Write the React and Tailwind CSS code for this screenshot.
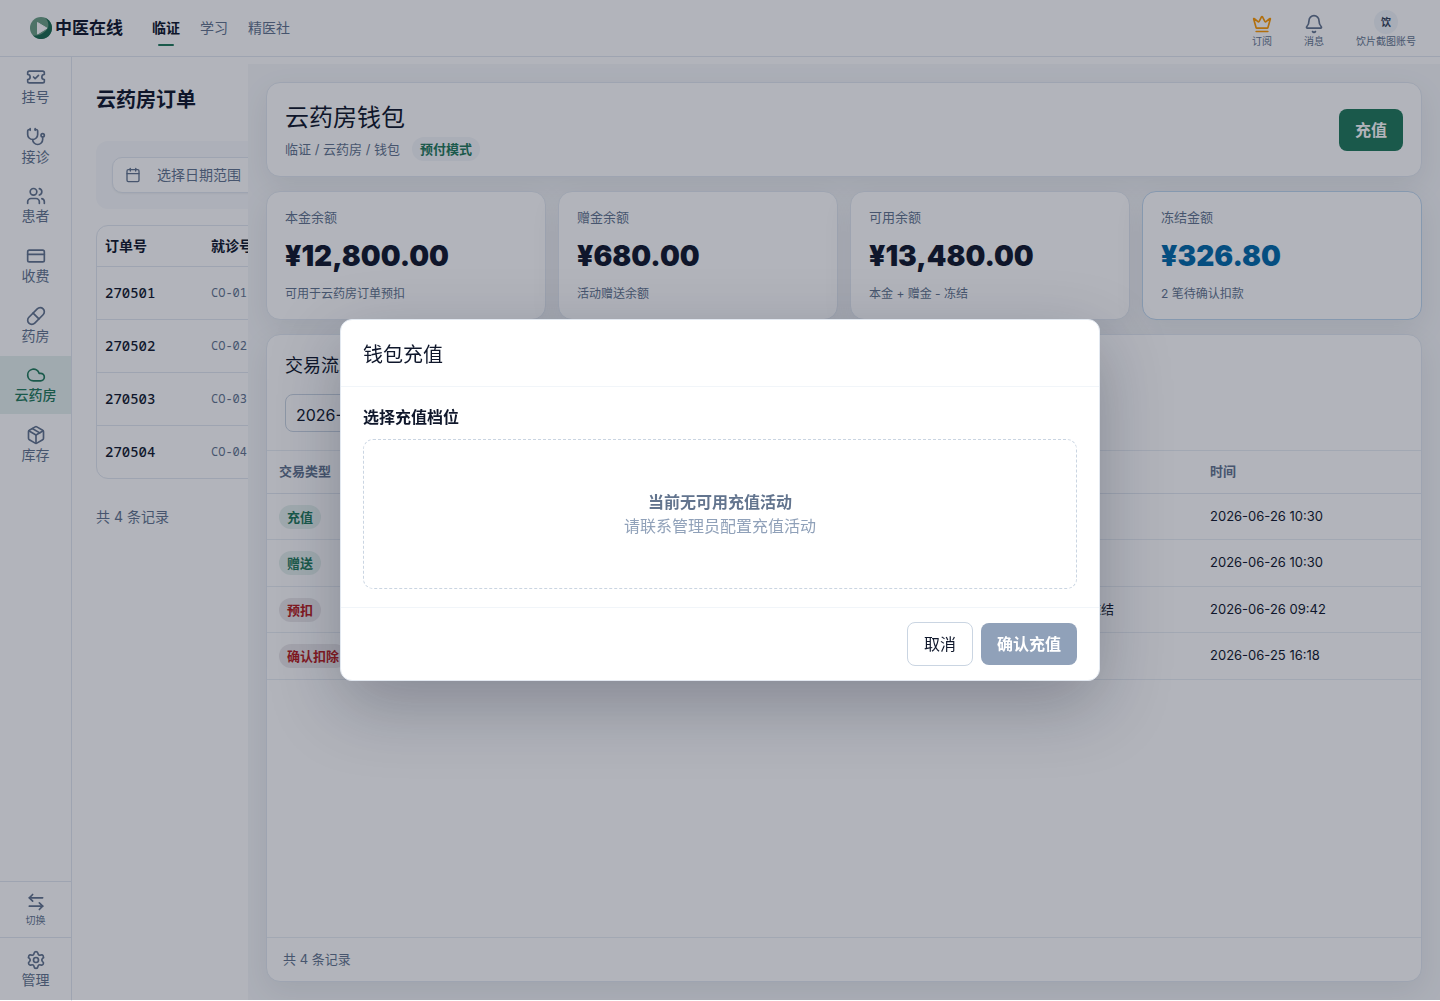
import {
	ArrowLeftRight,
	Bell,
	Calendar,
	Cloud,
	CreditCard,
	Crown,
	Package,
	Pill,
	Settings,
	Stethoscope,
	TicketCheck,
	Users,
} from "lucide-react";

const navItems = [
	{ label: "挂号", icon: TicketCheck },
	{ label: "接诊", icon: Stethoscope },
	{ label: "患者", icon: Users },
	{ label: "收费", icon: CreditCard },
	{ label: "药房", icon: Pill },
	{ label: "云药房", icon: Cloud, active: true },
	{ label: "库存", icon: Package },
];

const orders = [
	{ id: "270501", visit: "CO-01-0626" },
	{ id: "270502", visit: "CO-02-0626" },
	{ id: "270503", visit: "CO-03-0626" },
	{ id: "270504", visit: "CO-04-0626" },
];

const balances = [
	{ label: "本金余额", amount: "¥12,800.00", note: "可用于云药房订单预扣" },
	{ label: "赠金余额", amount: "¥680.00", note: "活动赠送余额" },
	{ label: "可用余额", amount: "¥13,480.00", note: "本金 + 赠金 - 冻结" },
	{ label: "冻结金额", amount: "¥326.80", note: "2 笔待确认扣款", frozen: true },
];

const transactions = [
	{ type: "充值", amount: "+¥5,000.00", order: "-", note: "钱包充值", time: "2026-06-26 10:30", income: true },
	{ type: "赠送", amount: "+¥200.00", order: "-", note: "活动赠送", time: "2026-06-26 10:30", income: true },
	{ type: "预扣", amount: "-¥168.40", order: "270502", note: "云药房订单预扣冻结", time: "2026-06-26 09:42" },
	{ type: "确认扣除", amount: "-¥158.40", order: "270501", note: "订单确认", time: "2026-06-25 16:18" },
];

function TopBar() {
	return (
		<header className="flex h-[57px] shrink-0 items-center justify-between border-b border-slate-200 bg-white pl-[30px] pr-6">
			<div className="flex items-center">
				<a href="#home" className="flex items-center gap-[3px]">
					<svg viewBox="0 0 22 22" className="size-[22px]" aria-hidden="true">
						<circle cx="11" cy="11" r="11" fill="#6a9f84" />
						<path d="M15 .8A11 11 0 1 1 3 18.6C8 19 14 17 18 11C19 7 18 3 15 .8Z" fill="#1a6a4e" />
						<path d="M7.500 5.500v11.500l9.500-5.800z" fill="#fff" stroke="#fff" strokeLinejoin="round" />
					</svg>
					<span className="text-[17px] leading-6 font-bold">中医在线</span>
				</a>
				<nav className="ml-[29px] flex gap-5 text-sm text-slate-500">
					<a href="#clinic" className="relative font-bold text-slate-900">
						临证
						<span className="absolute -bottom-2 left-1/2 h-0.5 w-4 -translate-x-1/2 rounded-full bg-[#1f7a5a]" />
					</a>
					<a href="#study">学习</a>
					<a href="#club">精医社</a>
				</nav>
			</div>
			<div className="flex items-end text-[10px] leading-[14px] text-slate-500">
				<button className="mr-8 flex flex-col items-center pt-1.5">
					<Crown size={20} className="text-amber-500" />
					订阅
				</button>
				<button className="mr-8 flex flex-col items-center pt-1.5">
					<Bell size={20} />
					消息
				</button>
				<button className="flex flex-col items-center">
					<span className="flex size-6 items-center justify-center rounded-full bg-slate-100 font-bold text-slate-700">饮</span>
					饮片截图账号
				</button>
			</div>
		</header>
	);
}

function Sidebar() {
	return (
		<aside className="flex w-[72px] shrink-0 flex-col justify-between border-r border-slate-200 text-sm text-slate-500">
			<nav className="grid h-[417px] grid-rows-7 gap-px">
				{navItems.map(({ label, icon: Icon, active }) => (
					<a
						key={label}
						href={`#${label}`}
						className={`flex flex-col items-center justify-center pt-px leading-5 ${active ? "bg-[#e5f1ed] font-medium text-[#1f7a5a]" : ""}`}
					>
						<Icon size={20} />
						{label}
					</a>
				))}
			</nav>
			<div>
				<button className="flex h-14 w-full flex-col items-center justify-center border-t border-slate-200 text-[10px] leading-4">
					<ArrowLeftRight size={20} />
					切换
				</button>
				<button className="flex h-16 w-full flex-col items-center justify-center border-t border-slate-200 leading-5">
					<Settings size={20} />
					管理
				</button>
			</div>
		</aside>
	);
}

function OrderList() {
	return (
		<section className="w-44 shrink-0 overflow-hidden pl-6 whitespace-nowrap">
			<div className="w-[640px] pt-7">
				<h1 className="text-xl leading-[30px] font-bold">云药房订单</h1>
				<div className="mt-[26px] rounded-xl bg-slate-50 p-4">
					<button className="flex h-9 w-64 items-center gap-4 rounded-[10px] border border-slate-200 bg-white px-3 text-sm text-slate-500 shadow-xs">
						<Calendar size={16} />
						选择日期范围
					</button>
				</div>
				<div className="mt-4 overflow-hidden rounded-xl border border-slate-200">
					<table className="w-full text-left text-sm">
						<thead>
							<tr className="h-10">
								<th className="w-[106px] px-2 font-bold">订单号</th>
								<th className="px-2 font-bold">就诊号</th>
							</tr>
						</thead>
						<tbody className="font-['Noto_Sans_Mono','Noto_Sans_Mono_CJK_SC','DejaVu_Sans_Mono',monospace]">
							{orders.map((order) => (
								<tr key={order.id} className="h-[53px] border-t border-slate-200">
									<td className="px-2 font-medium">{order.id}</td>
									<td className="px-2 text-xs text-slate-500">{order.visit}</td>
								</tr>
							))}
						</tbody>
					</table>
				</div>
				<p className="mt-7 text-sm text-slate-500">共 4 条记录</p>
			</div>
		</section>
	);
}

function Balance({ label, amount, note, frozen }) {
	return (
		<div className={`rounded-[14px] border bg-white px-[18px] py-4 shadow-[0_10px_30px_rgba(15,23,42,0.08)] ${frozen ? "border-[#bfd7ee]" : "border-slate-200"}`}>
			<div className="text-[13px] leading-[18px] text-slate-500">{label}</div>
			<div className={`mt-2 text-[28px] leading-[44px] font-black ${frozen ? "text-sky-700" : ""}`}>{amount}</div>
			<div className="mt-1.5 text-xs leading-[19px] text-slate-500">{note}</div>
		</div>
	);
}

function Wallet() {
	return (
		<main className="mt-[7px] mb-px flex min-w-0 flex-1 flex-col gap-3.5 overflow-hidden bg-[#f6f8fa] p-[18px]">
			<div className="flex items-center justify-between rounded-[14px] border border-slate-200 bg-white px-[18px] py-[15px] shadow-[0_10px_30px_rgba(15,23,42,0.08)]">
				<div>
					<h2 className="text-2xl leading-[39px]">云药房钱包</h2>
					<div className="flex items-center gap-3 text-[13px] leading-6 text-slate-500">
						<span>临证 / 云药房 / 钱包</span>
						<span className="rounded-full bg-[#f4f6f9] px-2 font-bold text-[#1f7a5a]">预付模式</span>
					</div>
				</div>
				<button className="h-[42px] rounded-lg bg-[#1f7a5a] px-4 text-base font-bold text-white">充值</button>
			</div>

			<div className="grid grid-cols-4 gap-3">
				{balances.map((item) => (
					<Balance key={item.label} {...item} />
				))}
			</div>

			<section className="flex flex-1 flex-col rounded-[14px] border border-slate-200 bg-white shadow-[0_10px_30px_rgba(15,23,42,0.08)]">
				<div className="px-[18px] pt-4 pb-[18px]">
					<h3 className="text-lg leading-[30px]">交易流水</h3>
					<input
						type="text"
						aria-label="交易日期"
						defaultValue="2026-06-01"
						className="mt-[13px] block h-[38px] w-44 rounded-lg border border-slate-300 px-2.5 pt-1 text-base"
					/>
				</div>
				<table className="w-full table-fixed text-left text-[13px]">
					<thead>
						<tr className="h-[43px] border-t border-b border-t-[#e8edf3] border-b-slate-200 text-slate-500">
							<th className="px-3 font-bold">交易类型</th>
							<th className="px-3 font-bold">金额</th>
							<th className="px-3 font-bold">关联订单</th>
							<th className="w-[213px] px-3 font-bold">说明</th>
							<th className="w-[223px] px-3 font-bold">时间</th>
						</tr>
					</thead>
					<tbody>
						{transactions.map((row) => (
							<tr key={row.type} className="border-b border-[#e8edf3] odd:h-[46px] even:h-[47px]">
								<td className="px-3">
									<span className={`inline-block rounded-full px-2 align-middle leading-6 font-bold ${row.income ? "bg-[#e5f1ed] text-[#1f7a5a]" : "bg-[#ebe8ea] text-[#b91c1c]"}`}>
										{row.type}
									</span>
								</td>
								<td className="px-3">{row.amount}</td>
								<td className="px-3">{row.order}</td>
								<td className="px-3">{row.note}</td>
								<td className="px-3">{row.time}</td>
							</tr>
						))}
					</tbody>
				</table>
				<div className="mt-auto border-t border-[#e8edf3] px-4 py-[11px] text-[13px] leading-[21px] text-slate-500">共 4 条记录</div>
			</section>
		</main>
	);
}

function RechargeDialog() {
	return (
		<div className="fixed inset-0 bottom-px flex items-center justify-center bg-[rgba(15,23,42,0.32)]">
			<div role="dialog" aria-modal="true" aria-labelledby="recharge-title" className="w-[760px] rounded-xl border border-slate-200 bg-white shadow-[0_24px_70px_rgba(15,23,42,0.28)]">
				<h2 id="recharge-title" className="border-b border-slate-100 px-[22px] pt-5 pb-4 text-xl leading-[30px]">
					钱包充值
				</h2>
				<div className="px-[22px] py-[18px]">
					<h3 className="text-base leading-6 font-bold">选择充值档位</h3>
					<div className="mt-2.5 flex h-[150px] flex-col items-center justify-center rounded-[10px] border border-dashed border-slate-300 text-base leading-6 text-slate-400">
						<strong className="font-bold text-slate-500">当前无可用充值活动</strong>
						<span>请联系管理员配置充值活动</span>
					</div>
				</div>
				<div className="flex items-center justify-end gap-2 border-t border-slate-100 px-[22px] py-3.5 text-base">
					<button className="h-11 rounded-lg border border-slate-300 px-4">取消</button>
					<button disabled className="h-[42px] rounded-lg bg-slate-400 px-4 font-bold text-white">确认充值</button>
				</div>
			</div>
		</div>
	);
}

function App() {
	return (
		<div className="flex h-screen flex-col overflow-hidden bg-white font-['Inter','Noto_Sans_CJK_SC',sans-serif] text-slate-900">
			<TopBar />
			<div className="flex min-h-0 flex-1">
				<Sidebar />
				<OrderList />
				<Wallet />
			</div>
			<RechargeDialog />
		</div>
	);
}

export default App;
